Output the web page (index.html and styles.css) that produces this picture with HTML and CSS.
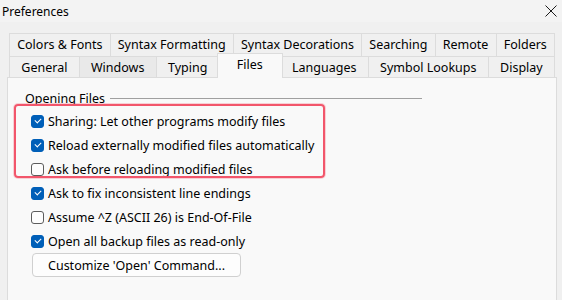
FILE: index.html
```html
<!DOCTYPE html>
<html lang="en">
<head>
    <meta charset="UTF-8">
    <title>Preferences</title>
    <link rel="stylesheet" href="styles.css">
</head>
<body>
    <div class="titlebar">
        <span class="title">Preferences</span>
        <svg class="close" width="12" height="12" viewBox="0 0 12 12">
            <path d="M0.5 0.5 L11.5 11.5 M11.5 0.5 L0.5 11.5" stroke="#1a1a1a" stroke-width="1" fill="none"/>
        </svg>
    </div>

    <div class="tabs">
        <div class="tab-row top">
            <div class="tab">Colors &amp; Fonts</div>
            <div class="tab">Syntax Formatting</div>
            <div class="tab">Syntax Decorations</div>
            <div class="tab">Searching</div>
            <div class="tab">Remote</div>
            <div class="tab">Folders</div>
        </div>
        <div class="tab-row bottom">
            <div class="tab">General</div>
            <div class="tab hover">Windows</div>
            <div class="tab">Typing</div>
            <div class="tab active">Files</div>
            <div class="tab">Languages</div>
            <div class="tab">Symbol Lookups</div>
            <div class="tab">Display</div>
        </div>
    </div>

    <div class="panel">
        <div class="group">
            <div class="group-title">
                <span>Opening Files</span>
                <span class="rule"></span>
            </div>
            <div class="highlight"></div>
            <label class="row"><span class="box checked"></span>Sharing: Let other programs modify files</label>
            <label class="row"><span class="box checked"></span>Reload externally modified files automatically</label>
            <label class="row"><span class="box"></span>Ask before reloading modified files</label>
            <label class="row"><span class="box checked"></span>Ask to fix inconsistent line endings</label>
            <label class="row"><span class="box"></span>Assume ^Z (ASCII 26) is End-Of-File</label>
            <label class="row"><span class="box checked"></span>Open all backup files as read-only</label>
            <button class="cmd">Customize 'Open' Command...</button>
        </div>
    </div>
</body>
</html>
```

FILE: styles.css
```css
html, body {
    height: 100%;
}

body {
    margin: 0;
    background-color: #f0f0f0;
    font-family: "Noto Sans", "Open Sans", sans-serif;
    font-size: 12.5px;
    color: #000;
    overflow: hidden;
}

.titlebar {
    height: 22px;
    background-color: #f3f3f3;
    display: flex;
    align-items: center;
    justify-content: space-between;
    padding: 0 5px 0 2px;
    font-size: 12px;
}

.close {
    display: block;
}

.tabs {
    margin-top: 11px;
    padding: 0 7px 0 10px;
}

.tab-row {
    display: flex;
}

.tab {
    flex: 1 1 auto;
    box-sizing: border-box;
    min-width: 56px;
    text-align: center;
    border: 1px solid #dcdcdc;
    border-bottom: 0;
    margin-left: -1px;
    padding: 0 7px;
    background-color: #f0f0f0;
}

.tab-row.top .tab {
    height: 23px;
    line-height: 22px;
}

.tab-row.bottom .tab {
    height: 21px;
    line-height: 21px;
}

.tab.hover {
    background-color: #e9e9e9;
}

.tab-row.bottom .tab.active {
    min-width: 66px;
    background-color: #f9f9f9;
    height: 25px;
    line-height: 22px;
    margin: -3px -2px -1px -3px;
    z-index: 1;
}

.panel {
    margin: 0 5px 0 7px;
    height: 230px;
    background-color: #f9f9f9;
    border: 1px solid #dcdcdc;
}

.group {
    position: relative;
    padding: 12px 0 0 23px;
}

.group-title {
    display: flex;
    align-items: center;
    height: 16px;
    width: 397px;
    margin-left: -6px;
}

.rule {
    flex: 1;
    height: 1px;
    margin-left: 5px;
    background-color: #a0a0a0;
}

.row {
    display: flex;
    align-items: center;
    height: 24px;
}

.group-title + .highlight + .row {
    margin-top: 3px;
}

.box {
    width: 11px;
    height: 11px;
    border: 1px solid #5c5c5c;
    border-radius: 3px;
    background-color: #fdfdfd;
    margin-right: 4px;
    position: relative;
}

.box.checked {
    background-color: #005fb8;
    border-color: #005fb8;
}

.box.checked::after {
    content: "";
    position: absolute;
    left: 3px;
    top: 2px;
    width: 5px;
    height: 3px;
    border-left: 1px solid #fff;
    border-bottom: 1px solid #fff;
    transform: rotate(-45deg);
}

.highlight {
    position: absolute;
    left: 6px;
    top: 26px;
    width: 307px;
    height: 70px;
    border: 2px solid #f2566b;
    border-radius: 4px;
    box-shadow: 0 0 0 1px rgba(242, 86, 107, 0.25);
    z-index: 1;
}

.cmd {
    display: block;
    margin-left: 1px;
    height: 24px;
    padding: 0 15px;
    font: inherit;
    color: #000;
    background-color: #fdfdfd;
    border: 1px solid #d0d0d0;
    border-radius: 4px;
}
```
